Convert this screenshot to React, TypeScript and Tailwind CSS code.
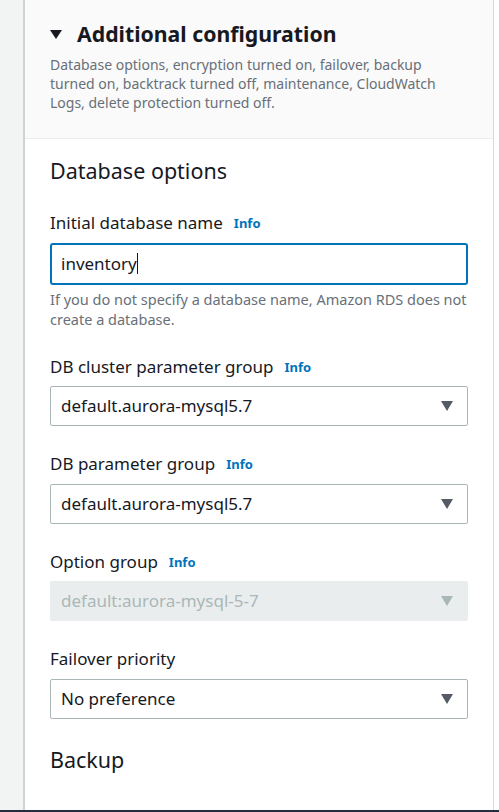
import { ReactNode } from "react";

function Caret({ disabled = false }: { disabled?: boolean }) {
  return (
    <svg
      aria-hidden="true"
      viewBox="0 0 12 10"
      className="h-[10px] w-[12px]"
      fill={disabled ? "#aab7b8" : "#545b64"}
    >
      <path d="M0 0h12L6 10z" />
    </svg>
  );
}

function InfoLink() {
  return <span className="ml-[11px] text-[13px] font-bold text-[#0073bb]">Info</span>;
}

function Field({ label, info = false, children }: { label: string; info?: boolean; children: ReactNode }) {
  return (
    <div className="mt-[27px]">
      <div className="flex items-center text-[17px] leading-[22px] text-[#16191f]">
        <span>{label}</span>
        {info ? <InfoLink /> : null}
      </div>
      <div className="mt-[8.5px]">{children}</div>
    </div>
  );
}

function Select({ value, disabled = false }: { value: string; disabled?: boolean }) {
  return (
    <div
      className={
        disabled
          ? "flex h-[40px] items-center justify-between rounded-[2px] border border-[#eaeded] bg-[#eaeded] pl-[10px] pr-[14px] text-[17px] text-[#aab7b8]"
          : "flex h-[40px] items-center justify-between rounded-[2px] border border-[#aab7b8] bg-white pl-[10px] pr-[14px] text-[17px] text-[#16191f]"
      }
    >
      <span>{value}</span>
      <Caret disabled={disabled} />
    </div>
  );
}

export default function App() {
  const selects = [
    { label: "DB cluster parameter group", value: "default.aurora-mysql5.7", info: true },
    { label: "DB parameter group", value: "default.aurora-mysql5.7", info: true },
    { label: "Option group", value: "default:aurora-mysql-5-7", info: true, disabled: true },
    { label: "Failover priority", value: "No preference", info: false },
  ];

  return (
    <div className="flex h-[812px] w-[499px] flex-col overflow-hidden bg-white font-['Noto_Sans',sans-serif] text-[#16191f]">
      <div className="flex min-h-0 flex-1">
        <div className="w-[25px] shrink-0 border-r-2 border-[#cdd2d2] bg-[#f2f3f3]" />
        <div className="w-[469px] shrink-0 border-r border-[#d5dbdb]">
          <div className="h-[139px] border-b border-[#eaeded] bg-[#fafafa] pl-[25px] pr-[30px] pt-[18px]">
            <div className="flex items-center">
              <svg aria-hidden="true" viewBox="0 0 12 9" className="h-[9px] w-[12px]" fill="#16191f">
                <path d="M0 0h12L6 9z" />
              </svg>
              <span className="ml-[15px] text-[21.25px] font-bold leading-[32px]">Additional configuration</span>
            </div>
            <p className="mt-[5px] text-[14px] leading-[19px] text-[#687078]">
              Database options, encryption turned on, failover, backup turned on, backtrack turned off, maintenance, CloudWatch Logs, delete protection turned off.
            </p>
          </div>

          <div className="pl-[25px] pr-[25px] pt-[18px]">
            <h3 className="text-[21.5px] leading-[28px] font-normal">Database options</h3>

            <Field label="Initial database name" info>
              <div className="flex h-[42px] items-center rounded-[3px] border-2 border-[#0073bb] pl-[9px] text-[17px]">
                <span>inventory</span>
                <span className="h-[21px] w-px bg-[#16191f]" />
              </div>
              <p className="mt-[4px] text-[14.5px] leading-[20px] text-[#687078]">
                If you do not specify a database name, Amazon RDS does not create a database.
              </p>
            </Field>

            {selects.map((item) => (
              <Field key={item.label} label={item.label} info={item.info}>
                <Select value={item.value} disabled={item.disabled} />
              </Field>
            ))}

            <h3 className="mt-[27px] text-[21.5px] leading-[28px] font-normal">Backup</h3>
          </div>
        </div>
        <div className="flex-1 bg-white" />
      </div>
      <div className="h-[2px] shrink-0 bg-[#232f3e]" />
    </div>
  );
}
